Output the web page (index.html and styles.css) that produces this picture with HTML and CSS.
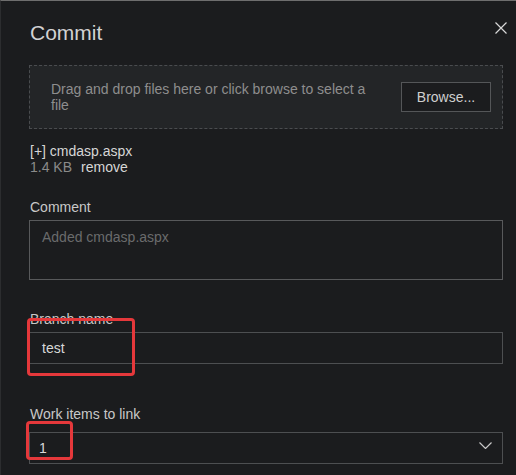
FILE: index.html
```html
<!DOCTYPE html>
<html>
<head>
<meta charset="utf-8">
<link rel="stylesheet" href="styles.css">
</head>
<body>
<div class="dialog">
  <div class="header">
    <h1 class="title">Commit</h1>
    <button class="close" aria-label="Close">
      <svg width="12" height="12" viewBox="0 0 12 12"><path d="M0.5 0.5 L11.5 11.5 M11.5 0.5 L0.5 11.5" stroke="#d8d8d8" stroke-width="1.2" fill="none"/></svg>
    </button>
  </div>
  <div class="dropzone">
    <div class="drop-text">Drag and drop files here or click browse to select a file</div>
    <button class="browse">Browse...</button>
  </div>
  <div class="file">
    <div class="file-name">[+] cmdasp.aspx</div>
    <div class="file-meta"><span class="size">1.4 KB</span><span class="remove">remove</span></div>
  </div>
  <div class="field field-comment">
    <div class="label">Comment</div>
    <div class="textarea"><span class="placeholder">Added cmdasp.aspx</span></div>
  </div>
  <div class="field field-branch">
    <div class="label">Branch name</div>
    <div class="input"><span class="value">test</span></div>
    <div class="mark mark-branch"></div>
  </div>
  <div class="field field-work">
    <div class="label">Work items to link</div>
    <div class="input select"><span class="value value-sel">1</span>
      <svg class="chev" width="13" height="7" viewBox="0 0 13 7"><path d="M0.5 0.5 L6.5 6.5 L12.5 0.5" stroke="#c8c8c8" stroke-width="1.2" fill="none"/></svg>
    </div>
    <div class="mark mark-work"></div>
  </div>
</div>
</body>
</html>
```
FILE: styles.css
```css
html, body {
  margin: 0;
  padding: 0;
  background: #1b1c1e;
}
body {
  width: 516px;
  height: 475px;
  overflow: hidden;
  font-family: "Liberation Sans", Arial, sans-serif;
  color: #c8c8c8;
}
.dialog {
  box-sizing: border-box;
  width: 516px;
  height: 475px;
  border-top: 1px solid #6e6e6e;
  border-left: 1px solid #2c2d2f;
  padding: 0 8px 0 28px;
  display: flex;
  flex-direction: column;
}
.header {
  display: flex;
  justify-content: space-between;
  align-items: flex-start;
  height: 64px;
}
.title {
  margin: 19px 0 0 1px;
  font-size: 21px;
  font-weight: normal;
  color: #d2d2d2;
  line-height: 26px;
}
.close {
  margin: 21px 0 0 0;
  padding: 0;
  background: none;
  border: 0;
  width: 13px;
  height: 13px;
  display: flex;
}
.dropzone {
  box-sizing: border-box;
  height: 64px;
  width: 474px;
  border: 1px dashed #4a4c4f;
  background: #232527;
  display: flex;
  align-items: flex-start;
  justify-content: space-between;
  padding: 15px 11px 0 21px;
}
.drop-text {
  width: 330px;
  font-size: 14px;
  line-height: 16px;
  color: #8e8e8e;
}
.browse {
  box-sizing: border-box;
  width: 90px;
  height: 30px;
  margin-top: 1px;
  background: #1b1c1e;
  border: 1px solid #545658;
  color: #cfcfcf;
  font-family: "Liberation Sans", Arial, sans-serif;
  font-size: 14px;
  padding: 0;
}
.file {
  margin-top: 14px;
  padding-left: 1px;
  font-size: 14px;
  line-height: 16px;
}
.file-name {
  color: #d6d6d6;
}
.size {
  color: #8a8a8a;
  margin-right: 9px;
}
.remove {
  color: #d6d6d6;
}
.field {
  position: relative;
  display: flex;
  flex-direction: column;
}
.label {
  font-size: 14px;
  line-height: 16px;
  color: #c8c8c8;
  padding-left: 1px;
}
.field-comment {
  margin-top: 24px;
}
.textarea {
  box-sizing: border-box;
  margin-top: 5px;
  width: 474px;
  height: 60px;
  border: 1px solid #58595b;
  padding: 8px 12px;
  font-size: 14px;
  line-height: 16px;
}
.placeholder {
  color: #6a6b6c;
}
.field-branch {
  margin-top: 31px;
}
.input {
  box-sizing: border-box;
  margin-top: 5px;
  width: 474px;
  height: 32px;
  border: 1px solid #4d4f51;
  padding: 7px 12px;
  font-size: 14px;
  line-height: 16px;
  display: flex;
  align-items: center;
  justify-content: space-between;
}
.value {
  color: #d8d8d8;
}
.field-work {
  margin-top: 42px;
}
.select {
  margin-top: 10px;
  padding: 7px 10px 7px 9px;
}
.chev {
  margin-top: -6px;
}
.mark {
  position: absolute;
  box-sizing: border-box;
  border: 3px solid #e5383b;
  border-radius: 4px;
}
.mark-branch {
  left: -2px;
  top: 7px;
  width: 108px;
  height: 58px;
}
.mark-work {
  left: -3px;
  top: 15px;
  width: 47px;
  height: 39px;
}
```
